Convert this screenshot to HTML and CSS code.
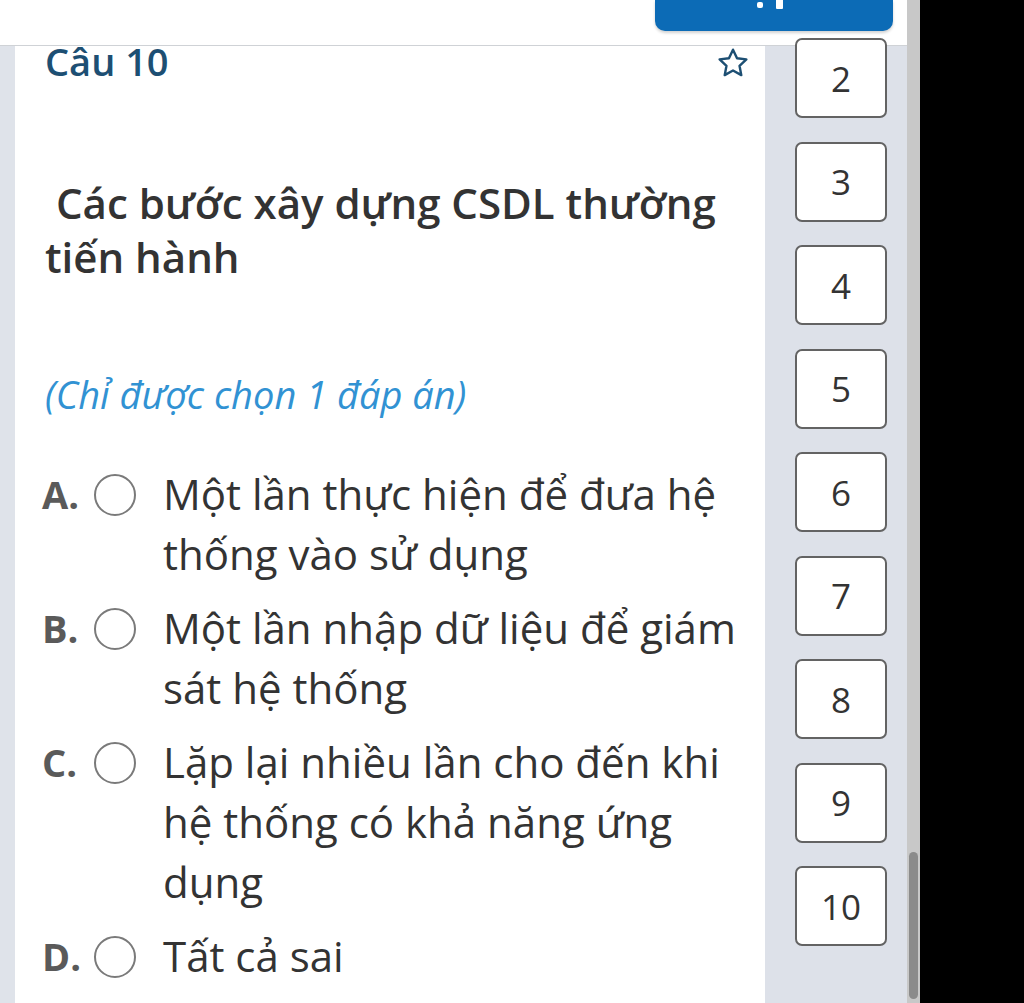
FILE: index.html
```html
<!DOCTYPE html>
<html lang="vi">
<head>
  <meta charset="UTF-8" />
  <meta name="viewport" content="width=device-width, initial-scale=1.0"/>
  <title>Câu 10</title>
  <link rel="stylesheet" href="styles.css">
</head>
<body>
  <div class="screen">
    <div class="app">
      <!-- Kopfzeile mit dem abgeschnittenen blauen Button -->
      <header class="topbar">
        <div class="submit-btn">
          <svg class="submit-icon" width="30" height="12" viewBox="0 0 30 12">
            <rect x="0" y="2" width="6" height="6" rx="2" fill="#fff"/>
            <rect x="19" y="-2" width="7" height="11" rx="1" fill="#fff"/>
          </svg>
        </div>
      </header>

      <div class="body">
        <div class="side-strip"></div>

        <main class="card">
          <div class="card-head">
            <h2 class="q-title">Câu 10</h2>
            <svg class="star" width="36" height="34" viewBox="0 0 24 24">
              <path d="M12 2.6l2.85 6.05 6.6.8-4.85 4.55 1.25 6.55L12 17.3l-5.85 3.25 1.25-6.55L2.55 9.45l6.6-.8z"
                    fill="none" stroke="#1d4f73" stroke-width="1.7" stroke-linejoin="round"/>
            </svg>
          </div>

          <p class="q-text">&nbsp;Các bước xây dựng CSDL thường tiến hành</p>
          <p class="q-hint">(Chỉ được chọn 1 đáp án)</p>

          <ul class="options">
            <li class="option">
              <span class="opt-letter">A.</span>
              <span class="radio"></span>
              <span class="opt-text">Một lần thực hiện để đưa hệ thống vào sử dụng</span>
            </li>
            <li class="option">
              <span class="opt-letter">B.</span>
              <span class="radio"></span>
              <span class="opt-text">Một lần nhập dữ liệu để giám sát hệ thống</span>
            </li>
            <li class="option">
              <span class="opt-letter">C.</span>
              <span class="radio"></span>
              <span class="opt-text">Lặp lại nhiều lần cho đến khi hệ thống có khả năng ứng dụng</span>
            </li>
            <li class="option">
              <span class="opt-letter">D.</span>
              <span class="radio"></span>
              <span class="opt-text">Tất cả sai</span>
            </li>
          </ul>
        </main>

        <!-- Fragen-Navigation rechts -->
        <nav class="q-nav">
          <button class="q-btn">2</button>
          <button class="q-btn">3</button>
          <button class="q-btn">4</button>
          <button class="q-btn">5</button>
          <button class="q-btn">6</button>
          <button class="q-btn">7</button>
          <button class="q-btn">8</button>
          <button class="q-btn">9</button>
          <button class="q-btn">10</button>
        </nav>
      </div>
    </div>

    <div class="scrollbar"><div class="thumb"></div></div>
    <div class="blackout"></div>
  </div>
</body>
</html>
```

FILE: styles.css
```css
:root {
  --strip: #dfe3ea;
  --panel: #dde1e9;
  --title: #1d4f73;
  --text: #333333;
  --muted: #5a5a5a;
  --hint: #3192d3;
  --blue: #0c6bb6;
}

html, body {
  margin: 0;
  padding: 0;
  width: 100%;
  height: 100%;
  overflow: hidden;
}
body {
  font-family: "Open Sans", "Noto Sans", sans-serif;
  background: #000;
  color: var(--text);
}

.screen {
  display: flex;
  height: 100%;
}

/* Linker Bereich: Kopf + Inhalt */
.app {
  width: 907px;
  display: flex;
  flex-direction: column;
  background: #fff;
}

.topbar {
  height: 45px;
  flex: none;
  border-bottom: 1px solid #cfd2d6;
  display: flex;
  justify-content: flex-end;
  padding-right: 14px;
  box-sizing: content-box;
}

.submit-btn {
  width: 238px;
  height: 31px;
  background: var(--blue);
  border-radius: 0 0 10px 10px;
  box-shadow: 0 2px 3px rgba(0, 0, 0, 0.18);
  display: flex;
  justify-content: center;
}
.submit-icon {
  margin-left: -4px;
}

.body {
  flex: 1;
  display: flex;
  min-height: 0;
}

.side-strip {
  width: 15px;
  flex: none;
  background: var(--strip);
}

/* Fragekarte */
.card {
  width: 750px;
  flex: none;
  padding: 0 18px 0 30px;
  box-sizing: border-box;
  background: #fff;
}

.card-head {
  display: flex;
  justify-content: space-between;
  align-items: flex-start;
}

.q-title {
  margin: 0;
  font-size: 38px;
  font-weight: 600;
  line-height: 30px;
  color: var(--title);
}

.star {
  margin-top: 0;
  margin-right: -4px;
}

.q-text {
  margin: 96px 0 0;
  font-size: 42px;
  font-weight: 600;
  line-height: 54px;
  color: var(--text);
  padding-right: 20px;
}

.q-hint {
  margin: 84px 0 0;
  font-size: 38px;
  font-style: italic;
  line-height: 52px;
  color: var(--hint);
}

.options {
  list-style: none;
  margin: 44px 0 0 -3px;
  padding: 0;
  display: flex;
  flex-direction: column;
  gap: 14px;
}

.option {
  display: flex;
  align-items: flex-start;
}

.opt-letter {
  width: 52px;
  flex: none;
  font-size: 38px;
  font-weight: 700;
  line-height: 60px;
  color: var(--muted);
}

.radio {
  width: 38px;
  height: 38px;
  flex: none;
  margin-top: 10px;
  border: 2px solid #7a7a7a;
  border-radius: 50%;
  box-sizing: content-box;
}

.opt-text {
  margin-left: 27px;
  font-size: 42px;
  line-height: 60px;
  color: var(--text);
}

/* Navigation */
.q-nav {
  width: 142px;
  flex: none;
  background: var(--panel);
  display: flex;
  flex-direction: column;
  align-items: flex-start;
  gap: 23.5px;
  padding-left: 30px;
  box-sizing: border-box;
}

.q-btn {
  width: 92px;
  height: 80px;
  flex: none;
  background: #fff;
  border: 2px solid #636363;
  border-radius: 7px;
  font-family: "Open Sans", sans-serif;
  font-size: 35px;
  color: var(--text);
  padding: 0;
}
.q-btn:first-child {
  margin-top: -8px;
}

/* Scrollbar + schwarzer Rand */
.scrollbar {
  width: 13px;
  flex: none;
  background: #c8c8c8;
  position: relative;
}
.thumb {
  position: absolute;
  left: 2px;
  right: 2px;
  top: 852px;
  bottom: 4px;
  background: #8b8b8b;
  border-radius: 5px;
}

.blackout {
  flex: 1;
  background: #000;
}
```
